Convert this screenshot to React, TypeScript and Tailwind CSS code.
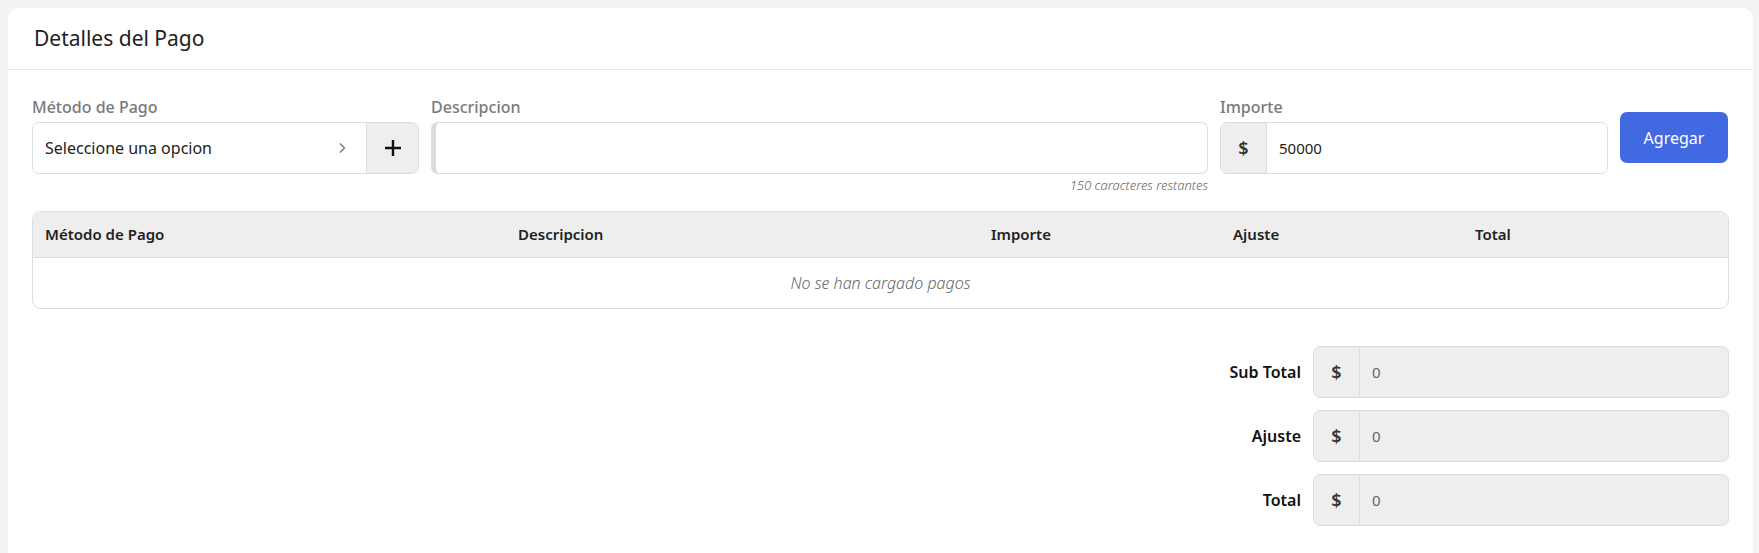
import React from "react";

const font = { fontFamily: '"Noto Sans", "Open Sans", sans-serif' };

function Dollar() {
  return (
    <div className="flex w-[46px] shrink-0 items-center justify-center border-r border-[#dcdcdc] bg-[#eeeeee] text-[18px] font-semibold text-[#333]">
      $
    </div>
  );
}

function TotalRow({ label }: { label: string }) {
  return (
    <div className="flex items-center justify-end gap-[12px]">
      <div className="text-[16px] font-semibold text-[#111]">{label}</div>
      <div className="flex h-[52px] w-[416px] overflow-hidden rounded-[7px] border border-[#dcdcdc] bg-[#eeeeee]">
        <Dollar />
        <div className="flex items-center pl-[12px] text-[15px] text-[#666]">0</div>
      </div>
    </div>
  );
}

export default function App() {
  return (
    <div className="min-h-screen bg-[#f3f3f3] pl-2 pr-[6px] pt-2" style={font}>
      <div className="rounded-[11px] bg-white pb-10">
        <div className="flex h-[62px] items-center border-b border-[#e6e6e6] px-[26px] text-[21px] text-[#222]">
          Detalles del Pago
        </div>
        <div className="px-6 pt-[26px]">
          <div className="flex items-start gap-[12px]">
            <div className="w-[387px] shrink-0">
              <div className="mb-[4px] h-[22px] text-[16px] font-medium leading-[22px] text-[#7a7a7a]">Método de Pago</div>
              <div className="flex h-[52px] overflow-hidden rounded-[7px] border border-[#dcdcdc]">
                <div className="flex flex-1 items-center justify-between pl-[12px] pr-[20px] text-[16px] text-[#222]">
                  <span>Seleccione una opcion</span>
                  <svg width="8" height="12" viewBox="0 0 8 12" fill="none">
                    <path d="M2 1.5l4.5 4.5L2 10.5" stroke="#777" strokeWidth="1.4" />
                  </svg>
                </div>
                <div className="flex w-[52px] shrink-0 items-center justify-center border-l border-[#dcdcdc] bg-[#eeeeee]">
                  <svg width="18" height="18" viewBox="0 0 18 18">
                    <path d="M9 1v16M1 9h16" stroke="#111" strokeWidth="2.4" />
                  </svg>
                </div>
              </div>
            </div>
            <div className="w-[777px] shrink-0">
              <div className="mb-[4px] h-[22px] text-[16px] font-medium leading-[22px] text-[#7a7a7a]">Descripcion</div>
              <div className="h-[52px] rounded-[7px] border border-l-[5px] border-[#dcdcdc]" />
              <div className="mt-[3px] text-right text-[13px] font-light italic leading-[16px] text-[#666]">150 caracteres restantes</div>
            </div>
            <div className="w-[388px] shrink-0">
              <div className="mb-[4px] h-[22px] text-[16px] font-medium leading-[22px] text-[#7a7a7a]">Importe</div>
              <div className="flex h-[52px] overflow-hidden rounded-[7px] border border-[#dcdcdc]">
                <Dollar />
                <div className="flex items-center pl-[12px] text-[15px] text-[#222]">50000</div>
              </div>
            </div>
            <button className="mt-[16px] h-[51px] w-[108px] shrink-0 rounded-[7px] bg-[#4169e1] text-[16px] text-white">
              Agregar
            </button>
          </div>

          <div className="mt-[18px] overflow-hidden rounded-[9px] border border-[#dcdcdc]">
            <div className="grid h-[46px] grid-cols-[473px_473px_242px_242px_1fr] items-center border-b border-[#dcdcdc] bg-[#eeeeee] text-[15px] font-semibold text-[#222]">
              <div className="pl-[12px]">Método de Pago</div>
              <div className="pl-[12px]">Descripcion</div>
              <div className="pl-[12px]">Importe</div>
              <div className="pl-[12px]">Ajuste</div>
              <div className="pl-[12px]">Total</div>
            </div>
            <div className="flex h-[50px] items-center justify-center text-[16px] font-light italic text-[#666]">
              No se han cargado pagos
            </div>
          </div>

          <div className="mt-[37px] flex flex-col gap-[12px]">
            <TotalRow label="Sub Total" />
            <TotalRow label="Ajuste" />
            <TotalRow label="Total" />
          </div>
        </div>
      </div>
    </div>
  );
}
